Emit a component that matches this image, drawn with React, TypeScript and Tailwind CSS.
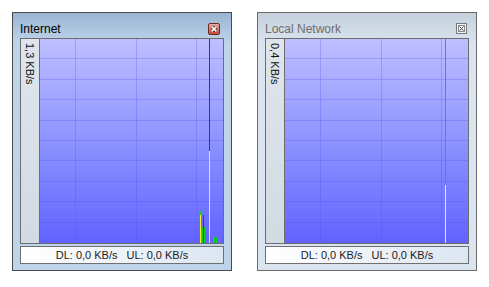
import React from 'react';

interface Seg {
  x: number;
  y1: number;
  y2: number;
  color: string;
}

interface NetWindow {
  title: string;
  scale: string;
  active: boolean;
  segs: Seg[];
}

const GRAPH_W = 183;
const GRAPH_H = 204;

const windows: NetWindow[] = [
  {
    title: 'Internet',
    scale: '1,3 KB/s',
    active: true,
    segs: [
      { x: 169, y1: 0, y2: 112, color: '#c4002c' },
      { x: 169, y1: 112, y2: 204, color: '#f4f040' },
      { x: 160, y1: 172, y2: 176, color: '#10d020' },
      { x: 160, y1: 176, y2: 204, color: '#f8f020' },
      { x: 161, y1: 188, y2: 204, color: '#30d020' },
      { x: 162, y1: 188, y2: 204, color: '#10d020' },
      { x: 163, y1: 176, y2: 204, color: '#d00020' },
      { x: 164, y1: 188, y2: 204, color: '#10d020' },
      { x: 173, y1: 198, y2: 204, color: '#10d020' },
      { x: 174, y1: 198, y2: 204, color: '#10d020' },
      { x: 176, y1: 198, y2: 204, color: '#10d020' },
      { x: 179, y1: 199, y2: 204, color: '#10d020' },
    ],
  },
  {
    title: 'Local Network',
    scale: '0,4 KB/s',
    active: false,
    segs: [
      { x: 160, y1: 0, y2: 146, color: '#10c040' },
      { x: 160, y1: 146, y2: 204, color: '#f4f080' },
    ],
  },
];

function Graph({ segs }: { segs: Seg[] }) {
  const hLines = Array.from({ length: 9 }, (_, i) => Math.round((i + 1) * 20.4) - 0.5);
  const vLines = [35.5, 96.5, 156.5];
  return (
    <div className="w-[183px] h-[204px] bg-linear-to-b from-[#bebeff] to-[#6262ff]">
      <svg width={GRAPH_W} height={GRAPH_H} shapeRendering="crispEdges" className="block">
        {hLines.map((y) => (
          <line key={'h' + y} x1={0} x2={GRAPH_W} y1={y} y2={y} stroke="#5050f0" strokeOpacity={0.28} />
        ))}
        {vLines.map((x) => (
          <line key={'v' + x} x1={x} x2={x} y1={0} y2={GRAPH_H} stroke="#5050f0" strokeOpacity={0.28} />
        ))}
        {segs.map((s, i) => (
          <rect key={i} x={s.x} y={s.y1} width={1} height={s.y2 - s.y1} fill={s.color} />
        ))}
      </svg>
    </div>
  );
}

function CloseActive() {
  return (
    <svg width="12" height="12" viewBox="0 0 12 12" className="block">
      <defs>
        <linearGradient id="cred" x1="0" y1="0" x2="0" y2="1">
          <stop offset="0" stopColor="#eab0a4" />
          <stop offset="1" stopColor="#c24a3c" />
        </linearGradient>
      </defs>
      <rect x="0.5" y="0.5" width="11" height="11" rx="1.5" fill="url(#cred)" stroke="#6e2a22" />
      <path d="M3.6 3.6 L8.4 8.4 M8.4 3.6 L3.6 8.4" stroke="#5a2018" strokeWidth="3" />
      <path d="M3.6 3.6 L8.4 8.4 M8.4 3.6 L3.6 8.4" stroke="#ffffff" strokeWidth="1.6" />
    </svg>
  );
}

function CloseInactive() {
  return (
    <svg width="11" height="11" viewBox="0 0 11 11" className="block" shapeRendering="crispEdges">
      <rect x="0.5" y="0.5" width="10" height="10" fill="#eef2f6" stroke="#7a7a7a" />
      <rect x="2.5" y="2.5" width="6" height="6" fill="none" stroke="#8a8a8a" />
      <path d="M3.5 3.5 L7.5 7.5 M7.5 3.5 L3.5 7.5" stroke="#555555" strokeWidth="1" shapeRendering="auto" />
    </svg>
  );
}

function Window({ w }: { w: NetWindow }) {
  return (
    <div
      className={
        w.active
          ? 'w-[220px] h-[259px] border border-[#4a4a4a] bg-linear-to-b from-[#9ab5d2] to-[#bed4ea] to-[12%] flex flex-col px-[7px] pb-[6px]'
          : 'w-[220px] h-[259px] border border-[#6a6a6a] bg-linear-to-b from-[#c4d1dd] to-[#dae4ee] to-[12%] flex flex-col px-[7px] pb-[6px]'
      }
    >
      <div className="h-[25px] flex justify-between shrink-0">
        <span
          className={
            w.active
              ? 'pt-[9px] leading-[14px] text-[12px] text-black'
              : 'pt-[9px] leading-[14px] text-[12px] text-[#6d6d6d]'
          }
        >
          {w.title}
        </span>
        <div className={w.active ? 'mt-[10px] mr-[4px]' : 'mt-[10px] mr-[2px]'}>
          {w.active ? <CloseActive /> : <CloseInactive />}
        </div>
      </div>
      <div className="h-[206px] border border-[#6d6d6d] flex shrink-0">
        <div className="w-[19px] border-r border-[#6d6d6d] bg-linear-to-b from-[#dfe5ec] to-[#d2dae3] flex justify-center pt-[4px]">
          <span className="[writing-mode:vertical-rl] text-[11px] leading-[12px] text-[#111]">{w.scale}</span>
        </div>
        <Graph segs={w.segs} />
      </div>
      <div className="mt-[2px] h-[18px] border border-[#707070] bg-linear-to-r from-white to-[#dce6f1] flex items-center justify-center gap-[9px] text-[11px] leading-[16px] text-[#1a1a1a] shrink-0">
        <span>DL: 0,0 KB/s</span>
        <span>UL: 0,0 KB/s</span>
      </div>
    </div>
  );
}

export default function App() {
  return (
    <div className="w-[489px] h-[287px] bg-white pt-[12px] pl-[12px] flex gap-[25px] font-['Liberation_Sans',Arial,sans-serif]">
      {windows.map((w) => (
        <Window key={w.title} w={w} />
      ))}
    </div>
  );
}
